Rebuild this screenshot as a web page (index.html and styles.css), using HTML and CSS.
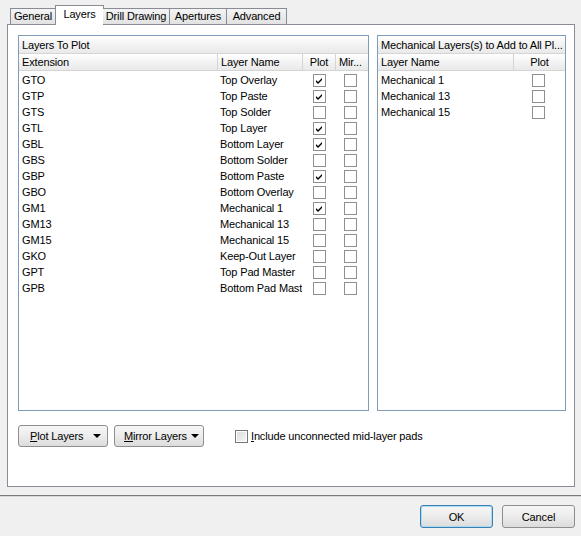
FILE: index.html
```html
<!DOCTYPE html>
<html>
<head>
<meta charset="utf-8">
<link rel="stylesheet" href="styles.css">
</head>
<body>
<div class="dialog">
  <div class="tabs">
    <div class="tab t-general">General</div>
    <div class="tab active t-layers">Layers</div>
    <div class="tab t-drill">Drill Drawing</div>
    <div class="tab t-apert">Apertures</div>
    <div class="tab t-adv">Advanced</div>
  </div>
  <div class="page">
    <div class="boxes">
      <div class="box left-box">
        <div class="box-title">Layers To Plot</div>
        <div class="row head lrow">
          <div class="c">Extension</div>
          <div class="c sep">Layer Name</div>
          <div class="c sep center">Plot</div>
          <div class="c sep">Mir...</div>
        </div>
        <div class="row lrow"><div class="c">GTO</div><div class="c">Top Overlay</div><div class="c cb"><span class="chk on"></span></div><div class="c cb2"><span class="chk"></span></div></div>
        <div class="row lrow"><div class="c">GTP</div><div class="c">Top Paste</div><div class="c cb"><span class="chk on"></span></div><div class="c cb2"><span class="chk"></span></div></div>
        <div class="row lrow"><div class="c">GTS</div><div class="c">Top Solder</div><div class="c cb"><span class="chk"></span></div><div class="c cb2"><span class="chk"></span></div></div>
        <div class="row lrow"><div class="c">GTL</div><div class="c">Top Layer</div><div class="c cb"><span class="chk on"></span></div><div class="c cb2"><span class="chk"></span></div></div>
        <div class="row lrow"><div class="c">GBL</div><div class="c">Bottom Layer</div><div class="c cb"><span class="chk on"></span></div><div class="c cb2"><span class="chk"></span></div></div>
        <div class="row lrow"><div class="c">GBS</div><div class="c">Bottom Solder</div><div class="c cb"><span class="chk"></span></div><div class="c cb2"><span class="chk"></span></div></div>
        <div class="row lrow"><div class="c">GBP</div><div class="c">Bottom Paste</div><div class="c cb"><span class="chk on"></span></div><div class="c cb2"><span class="chk"></span></div></div>
        <div class="row lrow"><div class="c">GBO</div><div class="c">Bottom Overlay</div><div class="c cb"><span class="chk"></span></div><div class="c cb2"><span class="chk"></span></div></div>
        <div class="row lrow"><div class="c">GM1</div><div class="c">Mechanical 1</div><div class="c cb"><span class="chk on"></span></div><div class="c cb2"><span class="chk"></span></div></div>
        <div class="row lrow"><div class="c">GM13</div><div class="c">Mechanical 13</div><div class="c cb"><span class="chk"></span></div><div class="c cb2"><span class="chk"></span></div></div>
        <div class="row lrow"><div class="c">GM15</div><div class="c">Mechanical 15</div><div class="c cb"><span class="chk"></span></div><div class="c cb2"><span class="chk"></span></div></div>
        <div class="row lrow"><div class="c">GKO</div><div class="c">Keep-Out Layer</div><div class="c cb"><span class="chk"></span></div><div class="c cb2"><span class="chk"></span></div></div>
        <div class="row lrow"><div class="c">GPT</div><div class="c">Top Pad Master</div><div class="c cb"><span class="chk"></span></div><div class="c cb2"><span class="chk"></span></div></div>
        <div class="row lrow"><div class="c">GPB</div><div class="c clip">Bottom Pad Mast</div><div class="c cb"><span class="chk"></span></div><div class="c cb2"><span class="chk"></span></div></div>
      </div>
      <div class="box right-box">
        <div class="box-title">Mechanical Layers(s) to Add to All Pl...</div>
        <div class="row head rrow">
          <div class="c">Layer Name</div>
          <div class="c sep center">Plot</div>
        </div>
        <div class="row rrow"><div class="c">Mechanical 1</div><div class="c rcb"><span class="chk"></span></div></div>
        <div class="row rrow"><div class="c">Mechanical 13</div><div class="c rcb"><span class="chk"></span></div></div>
        <div class="row rrow"><div class="c">Mechanical 15</div><div class="c rcb"><span class="chk"></span></div></div>
      </div>
    </div>
    <div class="actions">
      <div class="btn drop b-plot"><span><u>P</u>lot Layers</span><span class="arrow"></span></div>
      <div class="btn drop b-mirror"><span><u>M</u>irror Layers</span><span class="arrow"></span></div>
      <label class="opt"><span class="chk dim"></span><span><u>I</u>nclude unconnected mid-layer pads</span></label>
    </div>
  </div>
  <div class="footer">
    <div class="btn ok">OK</div>
    <div class="btn cancel">Cancel</div>
  </div>
</div>
</body>
</html>
```

FILE: styles.css
```css
* { box-sizing: border-box; }
html, body {
  margin: 0;
  padding: 0;
  background: #f0f0f0;
  font-family: "Liberation Sans", Arial, sans-serif;
  font-size: 11px;
  letter-spacing: -0.15px;
  color: #000;
}
.dialog {
  width: 581px;
  height: 536px;
  display: flex;
  flex-direction: column;
}
.tabs {
  display: flex;
  align-items: flex-end;
  height: 25px;
  padding-left: 10px;
  margin-bottom: -1px;
  position: relative;
  z-index: 1;
}
.tab {
  height: 16px;
  margin-bottom: 1px;
  border: 1px solid #898c95;
  border-bottom: none;
  border-left: none;
  background: linear-gradient(#f4f4f4, #e2e2e2);
  display: flex;
  align-items: center;
  justify-content: center;
  line-height: 1;
}
.t-general { width: 46px; border-left: 1px solid #898c95; }
.t-layers { width: 49px; }
.t-drill { width: 67px; }
.t-apert { width: 57px; }
.t-adv { width: 60px; }
.tab.active {
  height: 20px;
  margin-bottom: 0;
  background: #fff;
  border-left: 1px solid #898c95;
  margin-left: -1px;
  margin-right: -1px;
  padding-bottom: 2px;
}
.page {
  margin-left: 7px;
  width: 568px;
  height: 463px;
  background: #fff;
  border: 1px solid #898c95;
  padding: 10px 8px 0 10px;
}
.boxes {
  display: flex;
  gap: 8px;
}
.box {
  border: 1px solid #7f9db9;
  height: 376px;
  background: #fff;
}
.left-box { width: 351px; }
.right-box { width: 189px; }
.box-title {
  height: 18px;
  line-height: 18px;
  padding-left: 3px;
  background: linear-gradient(#ffffff, #f3f3f3 50%, #e9e9e9);
  border-bottom: 1px solid #d5d5d5;
  white-space: nowrap;
  overflow: hidden;
}
.row {
  display: grid;
  height: 16px;
  align-items: center;
}
.row.head {
  height: 17px;
  background: linear-gradient(#ffffff, #f3f3f3 50%, #e9e9e9);
  border-bottom: 1px solid #d5d5d5;
  margin-bottom: 1px;
}
.lrow { grid-template-columns: 198px 85px 33px 1fr; }
.rrow { grid-template-columns: 135px 1fr; }
.c {
  padding-left: 3px;
  white-space: nowrap;
  overflow: hidden;
  height: 100%;
  display: flex;
  align-items: center;
}
.head .c.sep { border-left: 1px solid #d5d5d5; }
.head .c.center { justify-content: center; padding-left: 0; }
.c.clip { overflow: hidden; }
.c.cb { padding-left: 11px; }
.c.cb2 { padding-left: 9px; }
.c.rcb { padding-left: 19px; }
.chk {
  display: inline-block;
  width: 13px;
  height: 13px;
  border: 1px solid #8f8f8f;
  background: #fff;
  flex: none;
}
.chk.on {
  background: #fff url("data:image/svg+xml,%3Csvg xmlns='http://www.w3.org/2000/svg' width='11' height='11'%3E%3Cpath d='M2 5 L4 7 L8 3 L8 5 L4 9 L2 7 Z' fill='%23000'/%3E%3C/svg%3E") no-repeat 0 0;
}
.chk.dim {
  border-color: #777;
  background: linear-gradient(135deg, #dcdcdc, #f6f6f6);
  box-shadow: inset 0 0 0 1px #fff;
}
.actions {
  display: flex;
  align-items: center;
  margin-top: 14px;
  height: 22px;
}
.btn {
  height: 22px;
  border: 1px solid #8e8e8e;
  border-radius: 3px;
  background: linear-gradient(#f6f6f6, #ececec 50%, #dcdcdc);
  display: flex;
  align-items: center;
  justify-content: center;
}
.btn.drop { justify-content: flex-start; padding-left: 11px; }
.b-plot { width: 90px; }
.b-mirror { width: 90px; margin-left: 6px; padding-left: 9px !important; }
.arrow {
  width: 0;
  height: 0;
  border-left: 4px solid transparent;
  border-right: 4px solid transparent;
  border-top: 4px solid #000;
  margin-left: 10px;
}
.b-mirror .arrow { margin-left: 4px; }
.opt {
  display: flex;
  align-items: center;
  gap: 3px;
  margin-left: 31px;
}
.footer {
  margin-top: 8px;
  border-top: 1px solid #7a7a7a;
  box-shadow: inset 0 1px 0 #d8d8d8;
  flex: 1;
  display: flex;
  justify-content: flex-end;
  padding: 9px 6px 0 0;
}
.footer .btn { width: 73px; height: 23px; }
.ok {
  border-color: #3c7fb1;
  box-shadow: inset 0 0 0 1px #a6dcf5;
}
.cancel { margin-left: 9px; }
```
